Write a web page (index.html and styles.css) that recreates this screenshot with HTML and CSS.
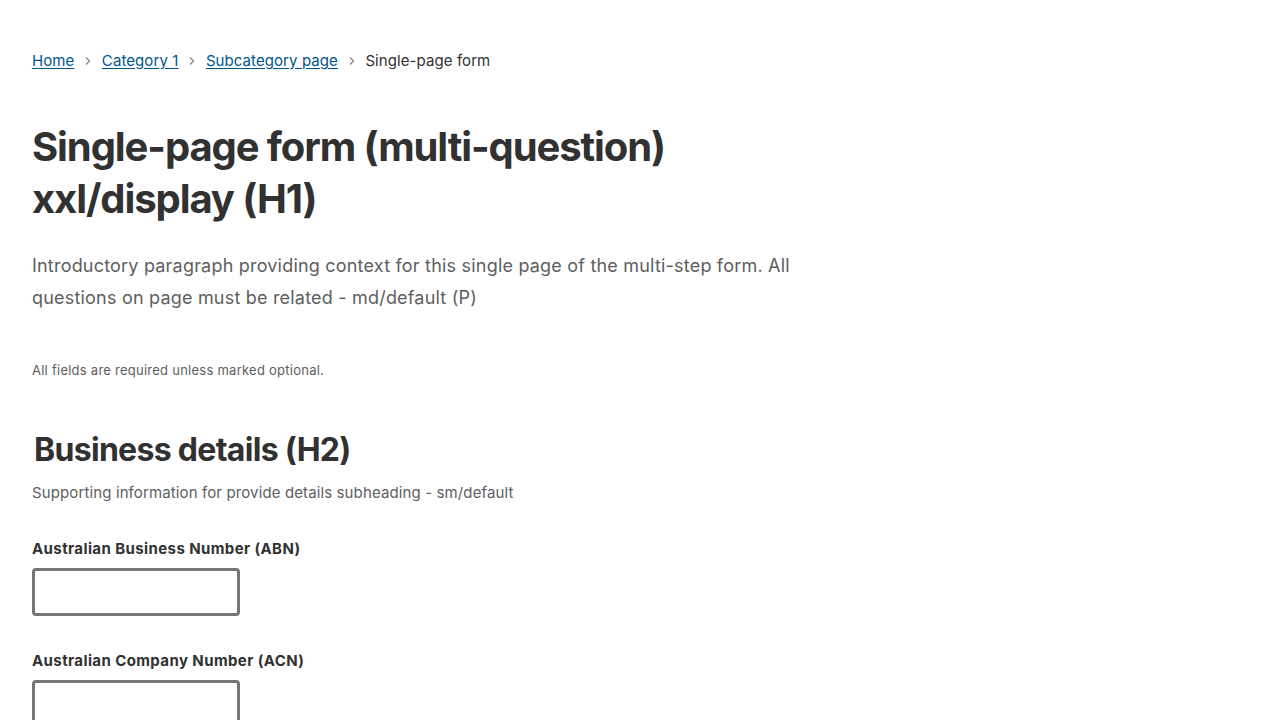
FILE: index.html
```html
<!DOCTYPE html>
<html lang="en">
<head>
<meta charset="utf-8">
<title>Single-page form</title>
<link rel="stylesheet" href="styles.css">
</head>
<body>
<main class="page">
  <nav class="breadcrumb" aria-label="Breadcrumb">
    <a href="#">Home</a>
    <svg class="chev" width="8" height="10" viewBox="0 0 8 10"><path d="M2 1.5 L5.5 5 L2 8.5" fill="none" stroke="#8a8a8a" stroke-width="1.4"/></svg>
    <a href="#">Category 1</a>
    <svg class="chev" width="8" height="10" viewBox="0 0 8 10"><path d="M2 1.5 L5.5 5 L2 8.5" fill="none" stroke="#8a8a8a" stroke-width="1.4"/></svg>
    <a href="#">Subcategory page</a>
    <svg class="chev" width="8" height="10" viewBox="0 0 8 10"><path d="M2 1.5 L5.5 5 L2 8.5" fill="none" stroke="#8a8a8a" stroke-width="1.4"/></svg>
    <span class="current">Single-page form</span>
  </nav>
  <h1 class="title">Single-page form (multi-question)<br>xxl/display (H1)</h1>
  <p class="intro">Introductory paragraph providing context for this single page of the multi-step form. All questions on page must be related - md/default (P)</p>
  <p class="required">All fields are required unless marked optional.</p>
  <h2 class="section">Business details (H2)</h2>
  <p class="support">Supporting information for provide details subheading - sm/default</p>
  <div class="field">
    <label class="label" for="abn">Australian Business Number (ABN)</label>
    <input class="input" id="abn" type="text">
  </div>
  <div class="field">
    <label class="label" for="acn">Australian Company Number (ACN)</label>
    <input class="input" id="acn" type="text">
  </div>
</main>
</body>
</html>
```

FILE: styles.css
```css
html, body {
  margin: 0;
  padding: 0;
  background: #ffffff;
}
body {
  font-family: Inter, "Noto Sans", sans-serif;
  color: #313131;
}
.page {
  padding: 50px 32px 0 32px;
}
.breadcrumb {
  display: flex;
  align-items: center;
  gap: 9px;
  font-size: 15px;
  letter-spacing: 0.08px;
  line-height: 22px;
  height: 22px;
}
.breadcrumb a {
  color: #00558b;
  text-decoration: underline;
  text-underline-offset: 2px;
}
.chev {
  display: block;
  margin: 0 0.75px;
}
.current {
  color: #313131;
}
.title {
  margin: 49px 0 0 0;
  font-size: 40px;
  line-height: 52px;
  font-weight: 700;
  letter-spacing: -1.1px;
  color: #313131;
}
.intro {
  margin: 25px 0 0 0;
  max-width: 800px;
  font-size: 18px;
  line-height: 32px;
  letter-spacing: 0.2px;
  color: #5e5e5e;
}
.required {
  margin: 46px 0 0 0;
  font-size: 13px;
  line-height: 20px;
  letter-spacing: 0.25px;
  color: #5e5e5e;
}
.section {
  margin: 50px 0 0 2px;
  font-size: 32px;
  line-height: 40px;
  font-weight: 700;
  letter-spacing: -0.7px;
  color: #313131;
}
.support {
  margin: 11px 0 0 0;
  font-size: 15px;
  line-height: 24px;
  letter-spacing: 0.12px;
  color: #5e5e5e;
}
.field {
  display: flex;
  flex-direction: column;
  align-items: flex-start;
  margin-top: 32px;
}
.field + .field {
  margin-top: 33px;
}
.label {
  font-size: 15px;
  line-height: 24px;
  font-weight: 700;
  letter-spacing: 0.4px;
  color: #313131;
}
.input {
  box-sizing: border-box;
  margin-top: 7px;
  width: 208px;
  height: 48px;
  border: 3px solid #767676;
  border-radius: 4px;
  background: #ffffff;
  padding: 0 10px;
  font-family: inherit;
  font-size: 16px;
}
```
